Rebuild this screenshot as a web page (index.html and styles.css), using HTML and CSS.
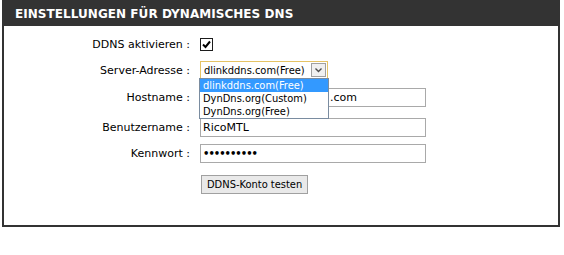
FILE: index.html
```html
<!DOCTYPE html>
<html lang="de">
<head>
    <meta charset="UTF-8">
    <title>Dynamisches DNS</title>
    <link rel="stylesheet" href="styles.css">
</head>
<body>
    <div class="box">
        <h2 class="box-title">EINSTELLUNGEN FÜR DYNAMISCHES DNS</h2>
        <div class="form">
            <div class="row row-check">
                <label class="lbl">DDNS aktivieren :</label>
                <div class="field"><span class="check">
                    <svg width="9" height="9" viewBox="0 0 9 9"><path d="M1 4.5 L3.5 7 L8 1.5" fill="none" stroke="#000" stroke-width="2"/></svg>
                </span></div>
            </div>
            <div class="row row-select">
                <label class="lbl">Server-Adresse :</label>
                <div class="field">
                    <div class="select">
                        <span class="select-value">dlinkddns.com(Free)</span>
                        <span class="select-btn">
                            <svg width="7" height="5" viewBox="0 0 7 5"><path d="M0.5 0.5 L3.5 3.5 L6.5 0.5" fill="none" stroke="#4d4d4d" stroke-width="1.4"/></svg>
                        </span>
                    </div>
                    <ul class="options">
                        <li class="active">dlinkddns.com(Free)</li>
                        <li>DynDns.org(Custom)</li>
                        <li>DynDns.org(Free)</li>
                    </ul>
                </div>
            </div>
            <div class="row row-host">
                <label class="lbl">Hostname :</label>
                <div class="field"><div class="input host">.com</div></div>
            </div>
            <div class="row row-user">
                <label class="lbl">Benutzername :</label>
                <div class="field"><div class="input">RicoMTL</div></div>
            </div>
            <div class="row row-pass">
                <label class="lbl">Kennwort :</label>
                <div class="field"><div class="input pass">&#8226;&#8226;&#8226;&#8226;&#8226;&#8226;&#8226;&#8226;&#8226;&#8226;</div></div>
            </div>
            <div class="row row-btn">
                <span class="lbl"></span>
                <div class="field"><button class="btn">DDNS-Konto testen</button></div>
            </div>
        </div>
    </div>
</body>
</html>
```

FILE: styles.css
```css
body {
    margin: 0;
    padding-left: 2px;
    background: #fff;
    font-family: "DejaVu Sans", sans-serif;
    font-size: 11px;
    color: #000;
}

.box {
    width: 558px;
    border: 2px solid #333;
    border-top: 0;
    height: 227px;
    box-sizing: border-box;
}

.box-title {
    margin: 0 -2px;
    background: #333;
    color: #fff;
    font-family: "DejaVu Sans", sans-serif;
    font-weight: bold;
    font-size: 12px;
    letter-spacing: 0.05px;
    height: 26px;
    line-height: 28px;
    padding-left: 13px;
}

.form {
    padding-top: 11px;
}

.row {
    display: flex;
    align-items: center;
}

.lbl {
    width: 186px;
    text-align: right;
    flex: none;
}

.field {
    margin-left: 10px;
    position: relative;
}

.row-check { height: 14px; }
.row-select { height: 18px; margin-top: 10px; }
.row-host { height: 19px; margin-top: 9px; }
.row-user { height: 19px; margin-top: 11px; }
.row-pass { height: 19px; margin-top: 7px; }
.row-btn { height: 19px; margin-top: 12px; }

.check {
    display: flex;
    align-items: center;
    justify-content: center;
    width: 11px;
    height: 11px;
    border: 1px solid #1c1c1c;
    background: #fff;
}

.select {
    display: flex;
    align-items: center;
    width: 128px;
    height: 18px;
    box-sizing: border-box;
    border: 1px solid #e5c365;
    padding-left: 3px;
    font-family: "DejaVu Sans Condensed", "DejaVu Sans", sans-serif;
}

.select-value {
    flex: 1;
    white-space: nowrap;
    overflow: hidden;
}

.select-btn {
    flex: none;
    display: flex;
    align-items: center;
    justify-content: center;
    width: 15px;
    height: 14px;
    margin-right: 1px;
    background: #f0f0f0;
    border: 1px solid #a0a0a0;
    box-sizing: border-box;
}

.options {
    position: absolute;
    top: 17px;
    left: -1px;
    width: 128px;
    margin: 0;
    padding: 0;
    list-style: none;
    background: #fff;
    border: 1px solid #7a8ca0;
    z-index: 2;
    font-family: "DejaVu Sans Condensed", "DejaVu Sans", sans-serif;
}

.options li {
    height: 13px;
    line-height: 13px;
    padding-left: 3px;
    white-space: nowrap;
}

.options li.active {
    background: #3399ff;
    color: #fff;
}

.input {
    width: 226px;
    height: 19px;
    box-sizing: border-box;
    border: 1px solid #a9a9a9;
    line-height: 17px;
    padding-left: 2px;
}

.host {
    padding-left: 129px;
}

.pass {
    font-size: 10px;
    letter-spacing: -1px;
    font-weight: bold;
}

.btn {
    font-family: "DejaVu Sans Condensed", "DejaVu Sans", sans-serif;
    font-size: 11px;
    color: #000;
    background: #e9e9e9;
    border: 1px solid #a0a0a0;
    height: 19px;
    padding: 0 5px;
    margin-left: 1px;
}
```
